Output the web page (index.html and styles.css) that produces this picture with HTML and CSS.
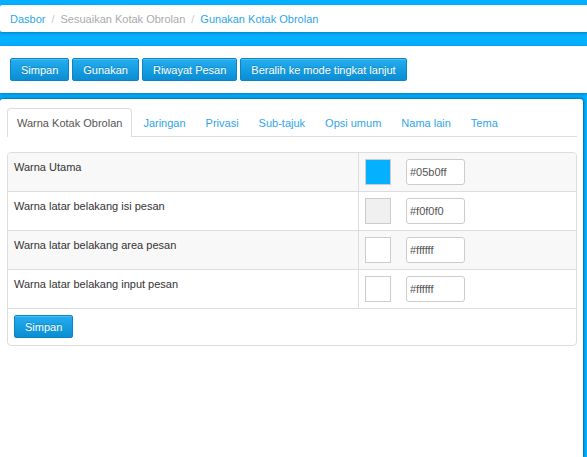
FILE: index.html
```html
<!DOCTYPE html>
<html>
<head>
<meta charset="utf-8">
<link rel="stylesheet" href="styles.css">
</head>
<body>
<div class="crumb">
  <a class="link">Dasbor</a><span class="sep">/</span><span class="mid">Sesuaikan Kotak Obrolan</span><span class="sep">/</span><a class="link">Gunakan Kotak Obrolan</a>
</div>
<div class="toolbar">
  <button class="btn">Simpan</button>
  <button class="btn">Gunakan</button>
  <button class="btn">Riwayat Pesan</button>
  <button class="btn">Beralih ke mode tingkat lanjut</button>
</div>
<div class="panel">
  <ul class="tabs">
    <li class="tab active">Warna Kotak Obrolan</li>
    <li class="tab">Jaringan</li>
    <li class="tab">Privasi</li>
    <li class="tab">Sub-tajuk</li>
    <li class="tab">Opsi umum</li>
    <li class="tab">Nama lain</li>
    <li class="tab">Tema</li>
  </ul>
  <div class="grid">
    <div class="row odd">
      <div class="label">Warna Utama</div>
      <div class="value"><span class="swatch sw-blue"></span><span class="input">#05b0ff</span></div>
    </div>
    <div class="row">
      <div class="label">Warna latar belakang isi pesan</div>
      <div class="value"><span class="swatch sw-gray"></span><span class="input">#f0f0f0</span></div>
    </div>
    <div class="row odd">
      <div class="label">Warna latar belakang area pesan</div>
      <div class="value"><span class="swatch"></span><span class="input">#ffffff</span></div>
    </div>
    <div class="row">
      <div class="label">Warna latar belakang input pesan</div>
      <div class="value"><span class="swatch"></span><span class="input">#ffffff</span></div>
    </div>
    <div class="foot">
      <button class="btn">Simpan</button>
    </div>
  </div>
</div>
</body>
</html>
```
FILE: styles.css
```css
html, body {
  margin: 0;
  padding: 0;
  height: 100%;
}
body {
  background: #05b0ff;
  font-family: "Liberation Sans", Arial, sans-serif;
  font-size: 11px;
  color: #333;
  display: flex;
  flex-direction: column;
  overflow: hidden;
}
.crumb {
  margin-top: 5px;
  height: 27px;
  background: #fff;
  border-radius: 2px 0 0 2px;
  box-shadow: 0 1px 3px rgba(0, 60, 110, 0.45);
  display: flex;
  align-items: center;
  padding-left: 10px;
  box-sizing: border-box;
}
.link { color: #2ea6ea; }
.mid { color: #aaa; }
.sep { color: #ccc; padding: 0 6px; }
.toolbar {
  margin-top: 14px;
  height: 47px;
  background: #fff;
  box-shadow: 0 1px 3px rgba(0, 60, 110, 0.45);
  padding: 12px 10px 0;
  box-sizing: border-box;
  display: flex;
  gap: 3px;
  align-items: flex-start;
}
.btn {
  height: 23px;
  padding: 0 10px;
  border: 1px solid #0a86c8;
  border-radius: 2px;
  background: linear-gradient(#23aef0, #0b8dd3);
  color: #fff;
  font-family: "Liberation Sans", Arial, sans-serif;
  font-size: 11px;
  text-shadow: 0 -1px 0 rgba(0, 0, 0, 0.2);
  box-shadow: inset 0 1px 0 rgba(255, 255, 255, 0.2);
}
.panel {
  margin-top: 6px;
  margin-right: 4px;
  flex: 1;
  background: #fff;
  border-radius: 3px 3px 0 0;
  box-shadow: 0 -1px 3px rgba(0, 60, 110, 0.45), 1px 0 2px rgba(0, 60, 110, 0.45);
  padding: 9px 6px 0 7px;
}
.tabs {
  list-style: none;
  margin: 0;
  padding: 0;
  display: flex;
  border-bottom: 1px solid #ddd;
  height: 28px;
}
.tab {
  height: 28px;
  box-sizing: border-box;
  padding: 0 8px;
  margin-right: 2px;
  border: 1px solid transparent;
  border-bottom: none;
  border-radius: 4px 4px 0 0;
  display: flex;
  align-items: center;
  color: #2ea6ea;
  margin-bottom: -1px;
}
.tab.active {
  padding: 0 9px;
  color: #555;
  border-color: #ddd;
  background: #fff;
  height: 29px;
}
.grid {
  margin-top: 15px;
  border: 1px solid #ddd;
  border-radius: 4px;
  overflow: hidden;
}
.row {
  display: grid;
  grid-template-columns: 351px 1fr;
  border-bottom: 1px solid #ddd;
  height: 39px;
  box-sizing: border-box;
}
.row.odd { background: #f8f8f8; }
.label {
  padding: 6px 6px;
  line-height: 16px;
  border-right: 1px solid #ddd;
}
.value {
  padding: 6px;
  display: flex;
  gap: 15px;
  align-items: flex-start;
}
.swatch {
  width: 26px;
  height: 26px;
  box-sizing: border-box;
  border: 1px solid #ccc;
  background: #fff;
}
.sw-blue { background: #05b0ff; }
.sw-gray { background: #f0f0f0; }
.input {
  width: 59px;
  height: 26px;
  box-sizing: border-box;
  border: 1px solid #ccc;
  border-radius: 3px;
  background: #fff;
  color: #555;
  font-size: 11px;
  padding-left: 3px;
  display: flex;
  align-items: center;
}
.foot {
  padding: 6px 6px 7px;
  height: 23px;
}
.foot .btn { padding: 0 10px; }
```
